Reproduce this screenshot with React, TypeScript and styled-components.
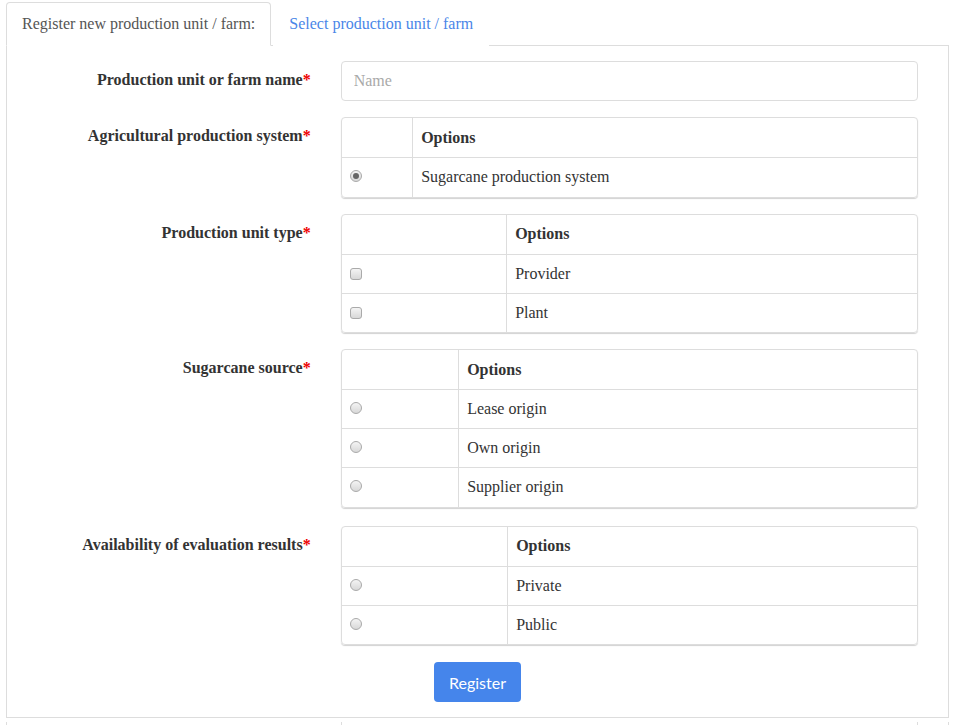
import React from "react";
import styled, { createGlobalStyle } from "styled-components";

const Global = createGlobalStyle`
  html, body { margin: 0; padding: 0; background: #fff; }
  body { font-family: "Liberation Serif", "Times New Roman", serif; font-size: 16px; line-height: 1.42857; color: #333; }
  * { box-sizing: border-box; }
`;

const Page = styled.div`
  padding: 2px 6px 0 6px;
`;

const Tabs = styled.ul`
  display: flex;
  list-style: none;
  margin: 0;
  padding: 0;
  border-bottom: 1px solid #ddd;
`;

const Tab = styled.li<{ $active?: boolean }>`
  margin-right: 2px;
  margin-bottom: -1px;
  padding: 10px 15px;
  border: 1px solid ${(p) => (p.$active ? "#ddd" : "transparent")};
  border-bottom-color: ${(p) => (p.$active ? "#fff" : "transparent")};
  border-radius: 4px 4px 0 0;
  background: #fff;
  color: ${(p) => (p.$active ? "#555" : "#4a86e8")};
  line-height: 22px;
  font-size: 16px;
  cursor: pointer;
`;

const Panel = styled.div`
  border: 1px solid #ddd;
  border-top: none;
  padding: 15px;
`;

const FormRow = styled.div<{ $gap?: number }>`
  display: grid;
  grid-template-columns: 1fr 2fr;
  margin-bottom: ${(p) => p.$gap ?? 16}px;
`;

const Label = styled.label`
  padding: 8px 15px 0 0;
  text-align: right;
  font-weight: bold;
  line-height: 1.42857;
  color: #333;
`;

const Req = styled.span`
  color: #e00;
`;

const Field = styled.div`
  padding: 0 15px;
`;

const TextInput = styled.input`
  display: block;
  width: 100%;
  height: 40px;
  padding: 6px 12px;
  border: 1px solid #ddd;
  border-radius: 4px;
  font-family: "Liberation Serif", "Times New Roman", serif;
  font-size: 16px;
  color: #555;
  &::placeholder { color: #a9a9a9; }
`;

const TableBox = styled.div`
  border: 1px solid #ddd;
  border-radius: 4px;
  box-shadow: 0 1px 1px rgba(0, 0, 0, 0.18);
  overflow: hidden;
`;

const Table = styled.table`
  width: 100%;
  border-collapse: collapse;
  table-layout: fixed;
`;

const Th = styled.th`
  text-align: left;
  padding: 8px;
  height: 39.5px;
  font-weight: bold;
  line-height: 22px;
  border-bottom: 1px solid #ddd;
  & + & { border-left: 1px solid #ddd; }
`;

const Td = styled.td`
  padding: 8px;
  height: 39px;
  line-height: 22px;
  vertical-align: top;
  border-top: 1px solid #ddd;
  & + & { border-left: 1px solid #ddd; }
`;

const Radio = styled.input.attrs({ type: "radio" })`
  appearance: none;
  -webkit-appearance: none;
  display: block;
  width: 12px;
  height: 12px;
  margin: 4px 0 0 0;
  border: 1px solid #aaa;
  border-radius: 50%;
  background: linear-gradient(#f4f4f4, #d8d8d8);
  position: relative;
  &:checked::after {
    content: "";
    position: absolute;
    left: 2px;
    top: 2px;
    width: 6px;
    height: 6px;
    border-radius: 50%;
    background: #666;
  }
`;

const Check = styled.input.attrs({ type: "checkbox" })`
  appearance: none;
  -webkit-appearance: none;
  display: block;
  width: 12px;
  height: 12px;
  margin: 5px 0 0 0;
  border: 1px solid #aaa;
  border-radius: 3px;
  background: linear-gradient(#f4f4f4, #d8d8d8);
`;

const Actions = styled.div`
  display: flex;
  justify-content: center;
  padding-top: 1px;
`;

const Button = styled.button`
  height: 40px;
  width: 87px;
  border: none;
  border-radius: 4px;
  background: #4585eb;
  color: #fff;
  font-family: Lato, "Open Sans", sans-serif;
  font-size: 16px;
  cursor: pointer;
`;

const NextPanel = styled.div`
  margin-top: 4px;
  border-left: 1px solid #ddd;
  border-right: 1px solid #ddd;
  padding: 0 15px;
  height: 40px;
`;

const GhostField = styled.div`
  height: 40px;
  border-left: 1px solid #ddd;
  border-right: 1px solid #ddd;
`;

type Opt = { label: string; checked?: boolean };

function OptionsTable({ kind, firstCol, options, name }: { kind: "radio" | "check"; firstCol: number; options: Opt[]; name: string }) {
  return (
    <TableBox>
      <Table>
        <colgroup>
          <col style={{ width: firstCol }} />
          <col />
        </colgroup>
        <thead>
          <tr>
            <Th />
            <Th>Options</Th>
          </tr>
        </thead>
        <tbody>
          {options.map((o) => (
            <tr key={o.label}>
              <Td>{kind === "radio" ? <Radio name={name} defaultChecked={o.checked} /> : <Check />}</Td>
              <Td>{o.label}</Td>
            </tr>
          ))}
        </tbody>
      </Table>
    </TableBox>
  );
}

export default function App() {
  return (
    <Page>
      <Global />
      <Tabs>
        <Tab $active>Register new production unit / farm:</Tab>
        <Tab>Select production unit / farm</Tab>
      </Tabs>
      <Panel>
        <FormRow>
          <Label>
            Production unit or farm name<Req>*</Req>
          </Label>
          <Field>
            <TextInput placeholder="Name" />
          </Field>
        </FormRow>
        <FormRow>
          <Label>
            Agricultural production system<Req>*</Req>
          </Label>
          <Field>
            <OptionsTable kind="radio" name="sys" firstCol={71} options={[{ label: "Sugarcane production system", checked: true }]} />
          </Field>
        </FormRow>
        <FormRow>
          <Label>
            Production unit type<Req>*</Req>
          </Label>
          <Field>
            <OptionsTable kind="check" name="type" firstCol={165} options={[{ label: "Provider" }, { label: "Plant" }]} />
          </Field>
        </FormRow>
        <FormRow $gap={18}>
          <Label>
            Sugarcane source<Req>*</Req>
          </Label>
          <Field>
            <OptionsTable kind="radio" name="src" firstCol={117} options={[{ label: "Lease origin" }, { label: "Own origin" }, { label: "Supplier origin" }]} />
          </Field>
        </FormRow>
        <FormRow>
          <Label>
            Availability of evaluation results<Req>*</Req>
          </Label>
          <Field>
            <OptionsTable kind="radio" name="avail" firstCol={166} options={[{ label: "Private" }, { label: "Public" }]} />
          </Field>
        </FormRow>
        <Actions>
          <Button>Register</Button>
        </Actions>
      </Panel>
      <NextPanel>
        <FormRow>
          <div />
          <Field>
            <GhostField />
          </Field>
        </FormRow>
      </NextPanel>
    </Page>
  );
}
